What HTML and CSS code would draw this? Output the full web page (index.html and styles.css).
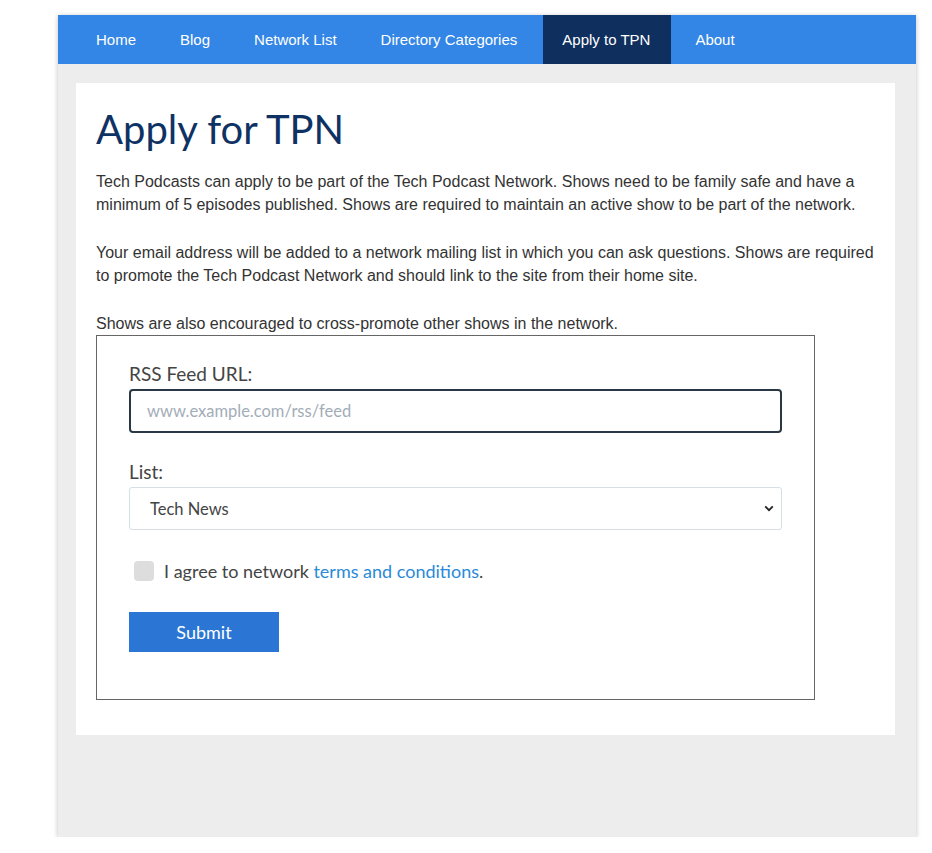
FILE: index.html
```html
<!DOCTYPE html>
<html lang="en">
<head>
  <meta charset="UTF-8">
  <meta name="viewport" content="width=device-width, initial-scale=1.0">
  <title>Apply for TPN</title>
  <link rel="stylesheet" href="styles.css">
</head>
<body>
  <div class="wrapper">
    <nav class="topnav">
      <a href="#">Home</a>
      <a href="#">Blog</a>
      <a href="#">Network List</a>
      <a href="#">Directory Categories</a>
      <a href="#" class="active">Apply to TPN</a>
      <a href="#">About</a>
    </nav>

    <div class="main">
      <div class="card">
        <h1>Apply for TPN</h1>
        <p>Tech Podcasts can apply to be part of the Tech Podcast Network. Shows need to be family safe and have a minimum of 5 episodes published. Shows are required to maintain an active show to be part of the network.</p>
        <p>Your email address will be added to a network mailing list in which you can ask questions. Shows are required to promote the Tech Podcast Network and should link to the site from their home site.</p>
        <p class="last">Shows are also encouraged to cross-promote other shows in the network.</p>

        <form class="apply-form">
          <label for="rssUrl">RSS Feed URL:</label>
          <input type="text" id="rssUrl" placeholder="www.example.com/rss/feed">

          <label for="listSelect">List:</label>
          <div class="select-wrap">
            <select id="listSelect">
              <option>Tech News</option>
              <option>Programming</option>
              <option>Gadgets</option>
            </select>
            <svg class="caret" width="10" height="7" viewBox="0 0 10 7"><path d="M1.2 1.4 L5 5.2 L8.8 1.4" fill="none" stroke="#222" stroke-width="1.8"/></svg>
          </div>

          <div class="agree">
            <span class="checkbox"></span>
            <span>I agree to network <a href="#">terms and conditions</a>.</span>
          </div>

          <button type="button" class="submit-btn">Submit</button>
        </form>
      </div>
    </div>
  </div>
</body>
</html>
```

FILE: styles.css
```css
body {
  margin: 0;
  background-color: #fff;
  font-family: "Liberation Sans", Arial, sans-serif;
}
.wrapper {
  margin: 15px 0 0 58px;
  width: 858px;
  min-height: 822px;
  background-color: #ededed;
  box-shadow: 0 1px 5px rgba(0, 0, 0, 0.25);
}
.topnav {
  display: flex;
  height: 49px;
  padding-left: 16px;
  background-color: #3386e5;
}
.topnav a {
  padding: 0 22px;
  line-height: 49px;
  font-size: 15px;
  color: #fff;
  text-decoration: none;
}
.topnav a.active {
  padding: 0 21px 0 19px;
  margin: 0 2px 0 4px;
  background-color: #0f2f5f;
}
.main {
  padding: 19px 21px 0 18px;
}
.card {
  background-color: #fff;
  padding: 18px 20px 35px;
}
h1 {
  margin: 0 0 13px;
  font-family: Lato, "Open Sans", sans-serif;
  font-weight: 400;
  font-size: 40px;
  line-height: 56px;
  color: #0f3264;
}
p {
  margin: 0 0 25px;
  font-size: 16px;
  line-height: 23px;
  color: #333;
}
p.last {
  margin-bottom: 0;
}
.apply-form {
  width: 653px;
  padding: 25px 32px 47px;
  border: 1px solid #666;
  font-family: Lato, "Open Sans", sans-serif;
  color: #444;
}
.apply-form label {
  display: block;
  font-size: 19px;
  line-height: 26px;
  margin-bottom: 2px;
}
.apply-form input[type="text"] {
  display: block;
  box-sizing: border-box;
  width: 100%;
  height: 44px;
  margin-bottom: 26px;
  padding: 0 16px;
  border: 2px solid #2a3744;
  border-radius: 4px;
  font-family: inherit;
  font-size: 16.5px;
  color: #333;
}
.apply-form input::placeholder {
  color: #a3adb8;
}
.select-wrap {
  position: relative;
}
.select-wrap select {
  display: block;
  box-sizing: border-box;
  width: 100%;
  height: 43px;
  padding: 0 20px;
  border: 1px solid #d6dee6;
  border-radius: 3px;
  background-color: #fff;
  font-family: inherit;
  font-size: 16.5px;
  color: #444;
  appearance: none;
}
.select-wrap .caret {
  position: absolute;
  right: 8px;
  top: 18px;
}
.agree {
  display: flex;
  align-items: center;
  margin: 30px 0 30px 5px;
  font-size: 18px;
}
.checkbox {
  width: 20px;
  height: 20px;
  margin-right: 10px;
  border-radius: 4px;
  background-color: #ddd;
}
.agree a {
  color: #2a8ad8;
  text-decoration: none;
}
.submit-btn {
  width: 150px;
  height: 40px;
  border: none;
  border-radius: 0;
  background-color: #2b76d4;
  color: #fff;
  font-family: inherit;
  font-size: 18px;
  cursor: pointer;
}
```
